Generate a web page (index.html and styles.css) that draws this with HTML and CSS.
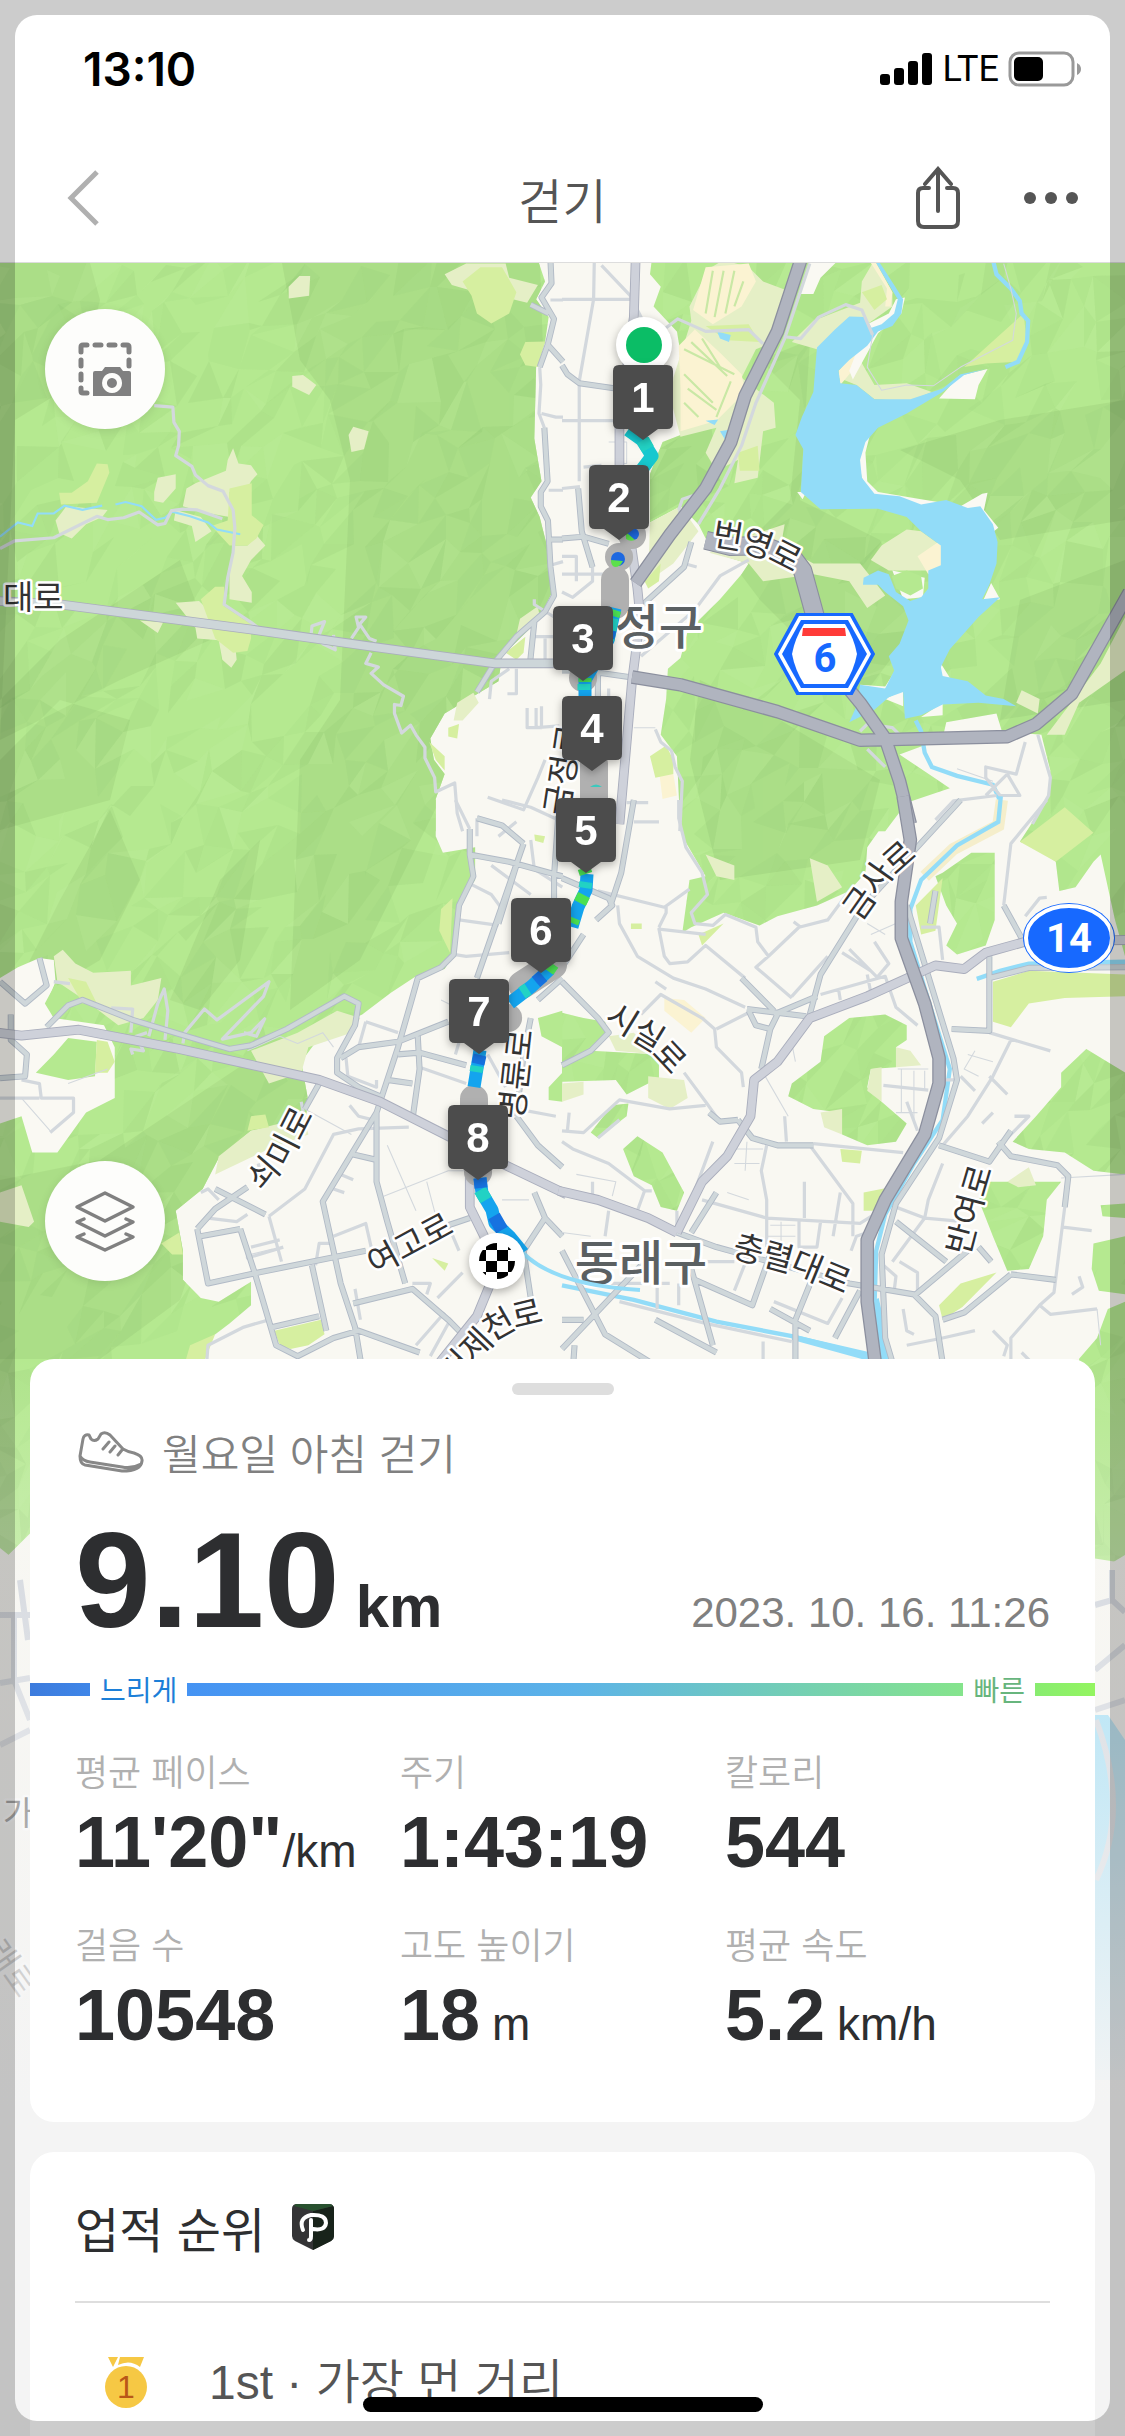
FILE: index.html
```html
<!DOCTYPE html>
<html lang="ko">
<head>
  <meta charset="UTF-8">
  <meta name="viewport" content="width=device-width, initial-scale=1.0">
  <title>걷기</title>
  <link rel="stylesheet" href="styles.css">
</head>
<body>
  <div class="app">
    <header class="header">
      <div class="status-bar">
        <span class="clock">13:10</span>
        <div class="status-icons">
          <svg width="54" height="34" viewBox="0 0 54 34"><rect x="0" y="22" width="10" height="11" rx="3"/><rect x="14" y="16" width="10" height="17" rx="3"/><rect x="28" y="9" width="10" height="24" rx="3"/><rect x="42" y="1" width="10" height="32" rx="3"/></svg>
          <span class="network">LTE</span>
          <svg width="74" height="36" viewBox="0 0 74 36"><rect x="2" y="2" width="63" height="32" rx="9" fill="none" stroke="#999" stroke-width="3"/><rect x="6" y="6" width="29" height="24" rx="5"/><path d="M69 12q4 2 4 6t-4 6z" fill="#999"/></svg>
        </div>
      </div>
      <nav class="nav-bar">
        <button class="icon-btn back" aria-label="뒤로"><svg width="34" height="58" viewBox="0 0 34 58"><path d="M31 3L5 29l26 26" fill="none" stroke="#b0b0b0" stroke-width="5"/></svg></button>
        <h1 class="page-title">걷기</h1>
        <div class="nav-actions">
          <button class="icon-btn" aria-label="공유"><svg width="46" height="64" viewBox="0 0 46 64" fill="none" stroke="#555" stroke-width="4" stroke-linecap="round"><path d="M14 22H8q-5 0-5 5v28q0 6 6 6h28q6 0 6-6V27q0-5-5-5h-6M23 45V4M10 18L23 3l13 15"/></svg></button>
          <button class="icon-btn" aria-label="더보기"><svg width="56" height="14" viewBox="0 0 56 14" fill="#555"><circle cx="7" cy="7" r="6"/><circle cx="28" cy="7" r="6"/><circle cx="49" cy="7" r="6"/></svg></button>
        </div>
      </nav>
    </header>

    <main class="stage">
      <svg class="map" viewBox="0 263 1125 2173" preserveAspectRatio="xMidYMin slice" role="img" aria-label="경로 지도">
        <defs>
          <!-- forest, one shape per tile -->
          <path id="green-a" d="M0 0H1500L1520 60 1495 110 1530 160 1520 230 1495 300 1490 500 1510 620 1480 665 1505 720 1525 800 1540 930 1500 1010 1400 1110 1390 1180 1340 1210 1240 1270 1200 1340 1210 1400 1240 1440 1215 1510V1600H0Z"/>
          <path id="green-b" d="M250 0L245 40 275 75 255 130 320 200 330 260 320 330 330 490 280 510 245 600V735L330 690 380 740 420 820 520 850 500 880 440 950 350 1040 330 1115 295 1145 290 1230 275 1330 320 1390 330 1600H900L960 1520 1080 1480 940 1385 1060 1340 1070 1295 1210 1270 1225 1320 1335 1330 1360 1430 1350 1520 1320 1568H1568V0Z"/>
          <path id="green-c" d="M0 0H1215V100L1235 145 1325 130V220L1275 290 1262 430 1240 465 1160 485 1090 530 1010 590 900 640 840 720 860 830 850 890 700 910 610 985 565 1070 490 1130 510 1240V1320L560 1370 610 1380 700 1325V1390L640 1440 560 1500 510 1568V1600L0 2100Z"/>
          <path id="green-d" d="M330 0H960L900 60 850 130 845 200 800 250 710 290 600 320 550 345 450 310 360 350 335 365 355 220 400 210 335 100ZM1350 0H1568V430L1540 330 1500 150 1480 170 1430 240 1385 250 1375 170 1320 130 1275 115ZM1060 200L1140 145H1205V330L1180 400 1100 425 1070 400 1100 340 1070 290 1040 210ZM630 815L640 780 720 720 730 650 800 600 900 590 960 620V660L930 680V735L860 740 850 790 890 830 960 890 930 940 850 950 780 920 775 860 700 850ZM1255 940L1320 870 1390 790V750L1460 685 1568 750V1030L1480 1020 1400 970 1300 960ZM1160 1100L1190 1050H1390L1350 1100 1340 1200 1300 1290 1240 1295 1200 1200ZM0 585L60 600 120 610 130 650 80 690 270 700V765L180 810 150 770 0 775ZM170 960L210 925 280 970 340 1080 320 1130 275 1120 250 1060 200 1035ZM80 915L140 840 185 835 180 870 100 930ZM1568 1110L1500 1115 1505 1145 1568 1150ZM1568 1200L1480 1220 1475 1290 1495 1350 1568 1360ZM1568 1380L1520 1400 1490 1480 1440 1537 1440 2080 1568 2100Z"/>
          <clipPath id="forest">
            <use href="#green-a" transform="translate(0 260) scale(.3586 .357)"/>
            <use href="#green-b" transform="translate(562 260) scale(.3591 .357)"/>
            <use href="#green-c" transform="translate(0 800) scale(.3586 .3635)"/>
            <use href="#green-d" transform="translate(562 800) scale(.3591 .3635)"/>
          </clipPath>

          <path id="street-a" d="M1535 0L1538 65 1510 105 1545 165 1528 235 1505 300M1518 470L1527 620 1508 650V690L1528 730 1535 860 1545 940 1520 985 1440 1055 1385 1120 1330 1210M1490 1015L1478 1130M1530 240L1570 285M1480 125L1530 150M1535 783H1570"/>
          <path id="main-a" d="M-10 955L170 965 700 1035 1050 1085 1380 1130H1580"/>
          <path id="street-b" d="M0 295L15 320 48 345 150 360M0 780L60 775 130 795M0 1150L60 1150 200 1170M45 640L55 760 85 860M360 790L340 860 220 970M100 1160V1300L80 1568"/>
          <path id="main-b" d="M205 0L200 160 160 460V620L190 780 210 920 218 1000 195 1180 160 1580"/>
          <path id="high-b" d="M665 0L600 200 510 380 470 510 400 640 300 770 205 905M195 1168L330 1190 600 1265 830 1345 1240 1335 1320 1300 1420 1215 1580 930M740 1130L830 1240 900 1340 940 1460 970 1580"/>
          <path id="high-b2" d="M400 785L470 802 560 800 640 830 670 870 700 980 740 1130"/>
          <path id="street-c" d="M130 625L190 565 230 550 370 605 520 650 640 685 700 675 800 630 960 540 1000 560 990 620 940 710V750L1000 790 1060 815M1310 80V150L1320 210 1280 290 1265 425 1230 460 1165 490 1145 560 1110 680 1060 830 1050 860 900 1105 950 1330 990 1450 1010 1568M1310 150L1420 170 1568 210M1050 860V1050L1080 1160 1130 1330M600 1070L740 1140M550 1180L600 1125 690 1065M550 1180L580 1330 720 1300 1020 1240M670 1180L560 1200M670 1180L710 1300 770 1500 830 1530 930 1480 1000 1460 1170 1520M870 1280L910 1460M760 1450L890 1420M890 780L850 850M950 710L1000 680 1110 665 1250 610M1165 650L1170 740 1150 880M1080 770L1150 780M1110 700L1170 695 1300 730M1250 1170L1310 1150M985 1385L1150 1345 1250 1430 1290 1470M1460 120L1330 490M1560 0L1545 210V270M1440 870L1500 950 1568 1010M1490 1080L1520 1150 1568 1200M1520 1150L1460 1240 1480 1370M1330 50L1400 70 1460 120M1480 600L1460 700 1440 870M1500 550L1568 490M0 500L70 560 130 510 110 435M30 590V660L75 700 70 760 0 765M985 975L1050 990M1440 180L1390 340"/>
          <path id="main-c" d="M-10 640L60 648 220 632 500 685 890 770 1060 830 1400 1000 1580 1085M1310 1020V1120L1350 1200 1380 1300 1330 1420 1200 1580"/>
          <path id="street-d" d="M1110 0L840 290 720 480 690 590M960 290L1090 710 1100 770 1050 930 930 1110 890 1250 900 1480 930 1580M515 575L680 595M500 490L590 580M590 590L710 540M520 580L540 620 580 630 600 590M580 630L555 740M0 215L130 270 140 290 95 330M200 0L165 200 135 290M1190 430V635L1085 630M1190 490L1300 462 1580 460M1050 950L1190 995 1250 910M1215 940L1250 980 1380 1005 1410 1035 1400 1120M1250 1305L1375 1320M1250 1305L1120 1410 1060 1430M320 1190L430 1230 800 1330 980 1360 1040 1420 1065 1580M490 880L530 930 600 950 700 950M490 880L440 885 410 860M430 1080L360 1190M0 730L80 690 130 640 100 600 0 500M360 1290L420 1500M370 1320L530 1390 580 1250M580 1400L690 1460M0 1240L120 1470 280 1568M0 1510L240 1260M260 1430L430 1520M720 1260L650 1430V1580M760 1480L830 1350M985 1360L1130 1240M930 1160L1070 1270M30 1568L35 1500M1160 1230L1195 1270M1230 290L1280 380M1040 250L1025 340M0 460L60 370M0 1430H60"/>
          <path id="main-d" d="M1580 385L1290 390 1180 420 1120 465 1040 455 850 540 690 600 600 720 535 770 525 870 460 980 390 1050 320 1190M-10 1075L100 1100 240 1150 320 1190"/>
          <path id="high-d" d="M950 -10L970 110 945 280V380L1010 560 1050 710V780L1010 920 900 1100 850 1210V1380L878 1590"/>

          <path id="lbl-beonyeong" d="M713 535Q760 538 812 572"/>
          <path id="lbl-geumjeong" d="M557 815L573 710"/>
          <path id="lbl-geumsa" d="M851 916L880 875 926 834"/>
          <path id="lbl-sisil" d="M609 1012L650 1037 694 1084"/>
          <path id="lbl-myeongnyun" d="M512 1120L523 1020"/>
          <path id="lbl-soemi" d="M254 1185L282 1153 307 1104"/>
          <path id="lbl-yeogo" d="M370 1266L466 1214"/>
          <path id="lbl-geoje" d="M445 1378L490 1331Q512 1313 565 1309"/>
          <path id="lbl-chungnyeol" d="M734 1246L800 1264 868 1292"/>
          <path id="lbl-banyeo" d="M958 1254L972 1200 988 1146"/>
          <clipPath id="flag-clip"><circle cx="497" cy="1261" r="18"/></clipPath>
        </defs>

        <rect class="land" x="0" y="263" width="1125" height="2173"/>
        <g class="forest">
          <use href="#green-a" transform="translate(0 260) scale(.3586 .357)"/>
          <use href="#green-b" transform="translate(562 260) scale(.3591 .357)"/>
          <use href="#green-c" transform="translate(0 800) scale(.3586 .3635)"/>
          <use href="#green-d" transform="translate(562 800) scale(.3591 .3635)"/>
        </g>
        <g clip-path="url(#forest)">
          <g class="relief">
            <path d="M282 263H540L555 700 440 800 360 960 290 1010 300 760 340 700 350 480 330 400 300 360ZM15 420L80 380 100 300 90 263H0V700L60 640 180 560 210 640 120 680 0 740ZM110 800L130 720 60 700 0 760V830ZM0 1020L60 900 110 810 140 880 100 960ZM170 1000L220 880 260 840 240 960 200 1010ZM100 1160L250 1060 330 1090 220 1180 180 1300 100 1359H0V1180Z"/>
            <path d="M640 460L710 420 720 480 650 520ZM730 560L790 500 800 400 760 360 810 340 800 500 880 540 920 620 860 700 760 600ZM900 450L1000 420 1125 400V520L1000 540 960 480ZM1020 600L1125 560V700L1000 720ZM700 680L780 720 880 780 860 860 720 880 690 760Z"/>
          </g>
          <g id="facets"></g>
        </g>

        <!-- north west -->
        <g transform="translate(0 260) scale(.3586 .357)">
          <path class="pale" d="M1240 40L1300 10H1410L1420 50 1500 70 1470 120 1430 110 1330 90 1260 70ZM805 75L835 45H865L862 100 805 108ZM815 325L845 322 882 350 862 378 815 355ZM972 490L985 467 1028 480 1015 530 980 538ZM430 650L440 610 490 600V640L455 680 430 675ZM155 730L185 690 300 700 285 720 240 740 200 780 165 765ZM510 690L520 640 545 625 630 590 635 560 650 527 665 570 700 575 718 600 700 620 690 640 640 650V720L560 705ZM485 730L490 700 560 720 590 760 545 790 535 745ZM690 800L715 770 740 800 700 840 675 885 702 930V960L640 950V880L655 800ZM490 960L555 955 600 1000 640 1030 655 1070 660 1120 645 1142 620 1120 610 1065 550 1060 545 1030ZM390 1010L455 1015 440 1045ZM1440 1050L1450 1005 1500 970 1505 1000ZM1265 1290L1275 1240 1320 1212 1335 1240 1290 1290Z"/>
          <path class="meadow" d="M1290 60L1340 20H1400L1440 90 1420 150 1370 178 1330 150 1315 100ZM1450 265L1465 230 1520 228 1500 300 1465 295ZM165 652H200L245 620 270 570 300 572 305 595 270 680 170 685ZM640 640L702 625V715L735 742 715 780 690 800 640 800 590 745 635 730ZM560 950L600 915H625V970L700 1020V1060L690 1095 650 1100 600 1060ZM1410 1100L1465 1055 1460 1100 1440 1120ZM1197 1350L1240 1390V1430L1215 1400ZM1250 1310L1280 1300 1275 1340 1250 1335Z"/>
          <path class="stream thin" d="M0 775L50 735 90 745 105 710H150L180 688 230 700 285 688M322 685L350 678 395 690 435 728 460 722 480 705 530 718 580 735 605 755 670 768"/>
          <path class="minor" d="M430 408L482 412 485 455 500 480 498 520 490 548 535 578 545 602 580 632 622 648 650 700 655 750 650 820 635 890 625 965 700 1015 720 1030M0 808L40 787 150 778 270 718 300 727 345 722 388 706 440 742 460 738 478 702 510 698 550 700 620 725M868 1045L870 1025 905 1013 890 1050 900 1075 935 1092 930 1050M980 1060L1000 1030 993 1000H1020L1003 1020 1030 1060 1050 1068M1035 1100L1020 1130 1055 1140 1035 1158 1070 1190 1125 1222 1118 1248 1100 1245V1270L1120 1325 1145 1303 1160 1330 1185 1365V1395L1212 1450 1215 1490 1268 1465 1275 1550 1290 1600M1505 300L1508 350 1503 430 1518 470M1510 430L1550 440H1570M1530 645H1570M1535 855L1570 845M1490 950V965L1545 1000M1485 1055H1570M1520 1060V1125M1365 1230L1370 1180 1420 1145M1440 1145V1215H1415M1470 1255V1310H1510V1250M1495 1255V1310L1560 1305M1360 1505L1460 1540 1500 1450 1520 1400M1535 112H1570"/>
          <use href="#street-a" class="street-case"/><use href="#street-a" class="street"/>
          <use href="#main-a" class="main-case"/><use href="#main-a" class="trunk"/>
        </g>

        <!-- north east -->
        <g transform="translate(562 260) scale(.3591 .357)">
          <path class="pale" d="M390 60L400 30 450 0 520 20 560 60 640 90 600 160 590 230 540 250 500 330 590 400 595 470 560 480 545 610 480 625 490 560 430 590 400 540 430 470 330 495 305 400 310 330 360 170 355 130ZM640 230L700 170 830 120 835 60 870 0 920 90V130L850 180 790 170 710 250ZM890 800L960 755 1000 760 1055 800 1075 850 1020 870 910 870 860 840ZM410 820L500 780 620 740 610 800 700 850 830 850 870 900 900 940 850 975 800 900 700 880 560 900 520 850ZM245 735L330 690 380 760 310 850 240 900ZM820 350L870 390 970 395 1030 370 960 345 870 350 830 280 860 240 790 280 770 330ZM1265 1240L1280 1205 1330 1230 1325 1270ZM1350 1330L1500 1130 1568 1000V1150L1440 1240 1400 1330Z"/>
          <path class="sand" d="M365 140L400 20 520 10 540 60 500 130 420 180ZM325 240L370 195 440 260 500 320 510 370 430 450 330 480 330 360ZM1055 785L1075 850 1020 880 990 830ZM870 0L920 90 915 130 900 130 905 80 855 0ZM775 350L770 310 830 240 850 240 800 320ZM270 1430L310 1440 320 1500 280 1510Z"/>
          <path class="meadow" d="M1120 300L1285 150 1295 230 1270 285 1180 290ZM400 185L520 180 550 230 460 225ZM490 540L545 520 550 590 495 590ZM835 90L890 70 905 110 870 140ZM230 900L275 850 270 900 240 920ZM245 1390L290 1360 310 1400 310 1440 260 1450Z"/>
          <path class="fairway" d="M420 30L400 150M450 30L425 160M480 30L455 150M505 60L480 130M340 250L480 320M360 230L460 325M390 220L440 300M340 320L420 400M350 360L430 420M340 400L380 440M470 340L430 440"/>
          <path class="bare" d="M690 0H770L720 50 700 95 660 95ZM1050 388L1105 325 1185 305 1160 350 1150 390ZM850 180L910 150 930 110 955 105 945 150 880 205 810 335 800 310ZM835 610L825 560 840 500 860 480 845 540 850 620 880 650 1000 670 1060 680 1110 690 1170 655 1185 652 1175 700 1215 750 1190 770 1100 710 1000 690 860 660ZM655 650L680 650 670 670ZM920 870L1010 890 1005 945 950 950ZM1170 960L1195 905 1220 950ZM830 1190L900 1195 925 1155 930 1180 880 1215ZM940 1080L965 1020 975 1080ZM1055 1130L1080 1170 1055 1170ZM1000 1280L1060 1240V1275ZM900 1230L950 1205V1250Z"/>
          <path class="water" d="M710 245L760 195 800 158 845 160 862 190 890 180 925 150 935 110 905 60 870 0H880L925 70 950 110 945 150 920 185 880 200 850 240 800 280 770 310 775 345 820 350 870 390H970L1060 360 1110 320 1180 305 1120 322 1060 370 960 430 880 470 845 510 830 560 835 610 870 655 940 662 1000 685 1070 672 1130 695 1165 690 1200 740 1213 790 1210 850 1190 910 1170 950 1220 945 1160 1000 1080 1090 1055 1140 1060 1165 1130 1180 1180 1220 1230 1230 1265 1250 1160 1240 1060 1245 1000 1275 955 1285 950 1210 910 1225 870 1260 800 1295 820 1250 830 1190 900 1200 925 1150 910 1110 940 1075 965 1010 950 970 900 930 880 910H838L840 890 880 870 910 880 930 930 970 955 1000 945 1020 920V870L1055 855V800L1000 760 960 720 880 697 720 698 665 650 672 530 650 490 668 440 700 370ZM432 200L470 210 465 230 440 220ZM400 450L435 447 425 462ZM440 480L470 475 455 505Z"/>
          <path class="forest" d="M918 885L960 870 1000 885 1005 920 970 940 930 920Z"/>
          <path class="stream" d="M1200 0L1210 40 1250 80 1275 115 1280 150 1298 170 1295 230 1270 285 1235 300M985 1290L1000 1320 1010 1380 1030 1420 1100 1445 1200 1470 1218 1510 1215 1580"/>
          <path class="minor" d="M90 0L88 110 48 340V620M0 110H200M110 15L190 100 235 190M0 450H170M0 640L50 635M85 840V900L30 945 0 930M620 215L665 220 715 160 790 125 835 140 865 210M290 190L322 165 400 200 520 195 560 235M520 840L440 885 370 980 220 1110M340 850L375 860M0 880H120M0 830H40V900M260 1315L275 1350 305 1375 315 1420 335 1460 328 1600M1290 1350L1265 1440 1180 1420V1450L1220 1500H1275L1240 1440 1180 1500M1325 1330L1360 1450 1355 1500 1310 1580M1040 1568L1090 1515 1210 1500M325 700L335 670 380 655M325 700L350 720M180 1520H240M60 580L110 575M830 1320L850 1300 920 1310 950 1340M850 1370L900 1420M110 1000V1130M130 1200V1400M200 1100L240 1060"/>
          <path class="minor hair" d="M865 210L850 300 890 365 960 350 1035 352 1110 300 1255 225 1265 150 1250 80 1230 10M1100 1425L1200 1460M130 510H180V570H160M200 1310H260"/>
          <use href="#street-b" class="street-case"/><use href="#street-b" class="street"/>
          <use href="#main-b" class="main-case"/><use href="#main-b" class="main"/>
          <path class="minor" d="M690 10L620 220 540 400 500 520 440 640 380 740"/>
          <use href="#high-b2" class="wide-case"/><use href="#high-b" class="high-case"/>
          <use href="#high-b2" class="wide"/><use href="#high-b" class="high"/>
        </g>

        <!-- south west -->
        <g transform="translate(0 800) scale(.3586 .3635)">
          <path class="bare" d="M0 490L50 460 110 435 150 440 155 500 130 560 150 600 290 620 320 680V820L240 860 160 970H90L60 870 0 890V1050L-10 1150V480Z"/>
          <path class="forest" d="M100 750L150 700 190 655 270 665 265 760 190 770ZM125 560L155 505 190 540 190 585 150 600Z"/>
          <path class="pale" d="M150 430L175 412 210 450 260 475 365 470V510L450 490 440 550 400 600 330 620 250 560 160 500ZM700 690L830 640 940 580 1005 600 980 640 860 680 840 750 750 780ZM610 980L700 910 780 890 850 880 860 920 750 960 600 1030ZM0 1080L60 1060 95 1160 80 1175 0 1160Z"/>
          <path class="meadow" d="M190 490L240 500 270 560 230 560ZM270 660L300 665 320 720 300 750 265 750ZM700 870L740 865 750 900 690 910ZM1230 300L1262 270 1255 420 1225 360ZM450 1220L500 1190 510 1250 480 1250ZM530 1500L600 1470 560 1568H510ZM765 1460L895 1430 905 1470 860 1500 810 1510 780 1500ZM1490 95L1520 100 1515 118 1492 112ZM1205 1260L1250 1275 1240 1295Z"/>
          <path class="forest" d="M1500 600L1568 580V680L1510 650ZM1530 790L1568 750V830L1530 825Z"/>
          <path class="minor" d="M365 640L370 575 310 572M415 650L440 560 458 520 468 580 460 660M370 700L365 685 400 690 380 650 410 640M510 670L515 640 570 575 605 605 750 500 735 540 620 658 700 640 738 602 715 650 680 640M1310 230L1370 260 1400 300M1280 330L1390 345M1265 425L1300 430 1420 420M1170 735L1300 780M750 1145L850 1070 930 920 1000 905 1140 900M750 1145L785 1270M575 1568L580 1500 680 1450 750 1430M1270 0L1310 80M1390 100L1440 60M1370 180L1480 260M1480 110L1490 190 1568 240M1020 610L1000 680M1020 610L1110 640M965 710L970 760 1050 790V770M700 1230L780 1210M880 1280L890 1220H930M930 1200L1020 1165 1035 1230M560 1080L580 1070 610 1100M150 500L195 505M60 770L110 780 115 820H205V860L140 915M0 820H110M720 1000L730 1040M1250 1170L1280 1240M1190 1360L1200 1330 1150 1330M1220 1370L1290 1300M690 1240V1260L790 1230M1270 700L1300 600M1360 700L1410 790M1440 850L1550 870M1330 100V50M840 830L850 880M975 840L1000 870 1040 880M950 1030L985 1045M930 1070L960 1080M580 1150L660 1160 690 1140M990 1345L1005 1430M1160 1500L1240 1410M1200 1530L1250 1440M1400 0L1480 20 1568 60"/>
          <path class="minor hair" d="M60 820L140 910M190 780L300 740M1080 950L1160 1130M1070 1090L1250 1020H1300M1190 1050L1230 1200M850 850L980 920M700 1250L760 1235M690 690L780 650 830 670 900 640 930 680M1400 1100H1475M1230 550L1290 580"/>
          <use href="#street-c" class="street-case"/><use href="#street-c" class="street"/>
          <use href="#main-c" class="main-case"/><use href="#main-c" class="main"/>
        </g>

        <!-- south east -->
        <g transform="translate(562 800) scale(.3591 .3635)">
          <path class="pale" d="M690 160L740 180 780 240 710 280ZM400 150L480 180 480 220 430 210ZM240 760L340 770 350 820 300 850 240 820ZM0 780L60 775 60 810 0 830ZM860 740L890 735V790L890 830 850 800ZM720 860L780 850V920L730 900ZM1240 1050L1300 1010 1320 1060 1270 1065ZM130 650L200 640 260 700 150 690ZM930 680L970 690 1000 730 930 735Z"/>
          <path class="meadow" d="M1200 500L1300 470 1568 480V540L1400 545 1300 560 1250 625 1200 610ZM985 290L1060 215 1040 360 1000 370ZM840 1080L900 1068 880 1130H840ZM775 960L835 965 830 1000 780 995ZM1050 1390L1110 1330 1210 1300 1115 1395 1060 1430ZM192 340H222V355H192ZM380 370L450 340 390 400ZM1275 115L1400 20 1480 90 1375 170Z"/>
          <path class="sand" d="M285 545L340 550 400 600 360 640 285 580Z"/>
          <path class="bank" d="M1225 0L1215 70 1090 135 1010 210"/>
          <path class="stream" d="M1222 -10L1215 60 1100 125 1000 220 970 300V390L1020 550 1080 740 1060 880 980 1000 900 1140 875 1240 870 1400 910 1580M0 1335L200 1375 430 1435 640 1475 860 1530M1155 492L1220 470 1300 450 1568 445"/>
          <path class="water" d="M860 1380L882 1370 930 1580H890ZM640 1470L860 1520V1545L640 1485Z"/>
          <path class="minor" d="M325 0V50L345 130 390 200 405 260 360 310 370 340 420 345 455 315 540 350 545 390 575 430M155 290L160 340 210 430 310 490 400 520 510 570M400 370L270 355 285 430 300 450 350 445 400 400 510 490M100 250L285 295 355 245M270 350L290 310 290 290M575 430L540 460 640 545M640 540L740 430M575 430L660 350 740 330 800 250M220 590L275 535 390 600 425 630 430 680 500 750 505 790M430 630L530 580M1350 0L1250 120 1230 290M800 410L880 490M780 420L860 470M720 535L900 485 930 570 990 620M870 390L910 450 880 485M850 480L860 530M770 520L775 550M570 950L555 1020 570 1100V1230M690 950L810 1110V1200M700 945L950 970M390 1100L570 1150 830 1165 870 1140M675 1050V1150M775 1080L755 1200M660 1155V1230H710L720 1160M0 940L30 960 130 1000 230 1075 210 1130M230 1075H250M340 750L400 830 440 885M0 910L60 915 160 825 300 850 400 840M20 860L15 910M160 880L100 930M1060 1000L1020 1100 1010 1150 920 1270M1250 660L1200 760 1130 870 1060 950M1190 640L1360 690M1190 760L1240 810M1110 760L1150 800M1170 890L1200 860M1395 1175L1475 1185M1400 1120L1370 1355 1330 1390 1360 1415 1490 1400M1330 1390L1250 1480V1568M895 785L1020 798M960 830L990 910M420 940L360 1100M85 1050V1100M130 1130L120 1200M130 1330H300M160 1380L400 1440 640 1490M480 1350L520 1250M590 1380L740 1440 780 1370M620 870L625 940M930 1120L1010 1150 1120 1160M895 1280L930 1310 925 1350M950 1400L960 1460 980 1470M960 1500L1060 1480 1150 1460M805 1240L820 1200 850 1190M1440 1310L1450 1340 1420 1360M1290 320L1330 270 1350 268M1060 770H1100M1000 350H1050L1060 440M990 1360V1300L940 1270M200 60H270M320 1190V1130M260 500L290 520M645 335L665 350M370 1270H480M265 1330V1400M325 1330V1390M560 1490V1568M1200 1460L1240 1500 1230 1530M1260 870L1300 870 1240 930M1280 1520L1310 1550"/>
          <path class="minor hair" d="M560 750L630 870M850 340L900 370M860 370L930 340M945 740V860M980 745V890M1010 745V800M935 740H1020M930 860H990M480 960H560M480 1000H550M515 940L510 1020M580 1170H650M570 1200H650M610 1160V1230M640 670L650 720M1130 700L1200 720M1150 690L1120 740 1160 760M0 1190L80 1200M40 1030L150 1050 140 1090M460 1080L520 1100M1390 1040L1568 1030M1490 1400L1500 1500"/>
          <use href="#street-d" class="street-case"/><use href="#street-d" class="street"/>
          <use href="#main-d" class="main-case"/><use href="#main-d" class="main"/>
          <use href="#high-d" class="high-case"/><use href="#high-d" class="high"/>
        </g>

        <!-- edges that stay visible beside the sheet -->
        <path class="land" d="M0 1548L30 1572V2100H0ZM1095 1564H1110L1125 1555V2100H1095Z"/>
        <path class="water" d="M1095 1715H1108L1125 1740V2080H1095Z"/>
        <path class="edge-road" d="M0 1615H30M14 1615V1680L30 1720M0 1683L30 1678M0 1745L30 1730M20 1580L28 1640M1095 1605L1112 1600 1125 1612M1112 1570V1600M1095 1670L1125 1645M1095 1710L1125 1700M1096 1720Q1130 1810 1096 1880"/>

        <g class="road-labels">
          <text x="3" y="609">대로</text>
          <text dy="11"><textPath href="#lbl-beonyeong">번영로</textPath></text>
          <text dy="11"><textPath href="#lbl-geumjeong">금정로</textPath></text>
          <text dy="11"><textPath href="#lbl-geumsa">금사로</textPath></text>
          <text dy="11"><textPath href="#lbl-sisil">시실로</textPath></text>
          <text dy="11"><textPath href="#lbl-myeongnyun">명륜로</textPath></text>
          <text dy="11"><textPath href="#lbl-soemi">쇠미로</textPath></text>
          <text dy="11"><textPath href="#lbl-yeogo">여고로</textPath></text>
          <text dy="11"><textPath href="#lbl-geoje">거제천로</textPath></text>
          <text dy="11"><textPath href="#lbl-chungnyeol">충렬대로</textPath></text>
          <text dy="11"><textPath href="#lbl-banyeo">반여로</textPath></text>
          <text x="3" y="1825">가</text>
          <text transform="translate(-16 1950) rotate(55)">래로</text>
        </g>
        <g class="area-labels">
          <text x="703" y="644" text-anchor="end">정구</text>
          <text x="641" y="1280" text-anchor="middle">동래구</text>
        </g>

        <path d="M797 614h55l22 40-22 40h-55l-22-40z" fill="#1769ff" stroke="#1769ff" stroke-width="2"/>
        <path d="M799 616h51l21 38-21 38h-51l-21-38z" fill="#fff"/>
        <path d="M801 620h47l19 34-19 34h-47l-19-34z" fill="#1769ff"/>
        <path d="M804 624h41q9 14 12 30-3 16-12 30h-41q-9-14-12-30 3-16 12-30z" fill="#fff"/>
        <path d="M803 628h42l1 8h-44z" fill="#ff3b38"/>
        <text class="shield-text shield-blue" x="825" y="672">6</text>
        <ellipse cx="1069" cy="938" rx="46" ry="35" fill="#1769ff"/>
        <ellipse cx="1069" cy="938" rx="43" ry="32" fill="none" stroke="#fff" stroke-width="4"/>
        <text class="shield-text shield-white" x="1069" y="952">14</text>

        <g class="route">
          <path class="paused" d="M632 535h.1M619 557h.1M615 580V605M583 678h.1M594 764V806M553 965L522 985M508 1018h.1M474 1099V1110M478 1172h.1"/>
          <path d="M628 430L642 440 652 456 640 472 628 530" stroke="#17c8cf"/>
          <path d="M615 608L608 640 585 680 585 710M587 874L586 890 578 907 572 927M550 969L532 986 510 1003M480 1050L474 1087M480 1178L482 1193 492 1210 495 1223 510 1237 523 1253" stroke="#14a4ee"/>
          <path d="M643 440L648 449M612 618L608 640M584 684V690M586 882L585 888M528 989L522 993M477 1066L476 1072M480 1190L486 1200" stroke="#22d2c4"/>
          <path d="M615 610L613 616M585 678V682M584 868L586 874M584 895L580 903M574 918L572 923M553 964L548 971" stroke="#4be052"/>
          <path d="M610 630L608 638M480 1055L478 1064M543 976L536 982M480 1178L481 1188M494 1216L502 1230" stroke="#1772e0"/>
        </g>
        <circle cx="633" cy="534" r="6" fill="#1d68e0"/><path d="M626 532l9 8q-5 2-9-1z" fill="#5ce04a"/>
        <circle cx="618" cy="559" r="7" fill="#1d68e0"/><path d="M611 560l12 1q-3 6-8 6-4-1-4-7z" fill="#5ce04a"/>
        <path d="M590 787q6-5 12 0z" fill="#3bc9bd"/>
        <path class="canal" d="M523 1253Q555 1285 640 1290"/>

        <g class="dots">
          <circle cx="644" cy="345" r="28" fill="#fff"/><circle cx="644" cy="345" r="18" fill="#0bbd66"/>
          <circle cx="497" cy="1261" r="28" fill="#fff"/>
        </g>
        <path clip-path="url(#flag-clip)" d="M486 1241h11v9h-11zM508 1241h11v9h-11zM475 1250h11v11h-11zM497 1250h11v11h-11zM486 1261h11v11h-11zM508 1261h11v11h-11zM475 1272h11v9h-11zM497 1272h11v9h-11z"/>
        <g id="pins" class="pins"></g>
      </svg>

      <div class="map-controls">
        <button class="round-btn" aria-label="지도 캡처">
          <svg width="54" height="54" viewBox="0 0 54 54"><path d="M3 10V5q0-2 2-2h4M17 3h6M31 3h6M45 3h4q2 0 2 2v5M51 18v6M3 18v6M3 32v6M3 46v3q0 2 2 2h4" fill="none" stroke="#808080" stroke-width="5" stroke-linecap="round"/><path fill="#808080" fill-rule="evenodd" d="M15 31q0-2 2-2h7l3-4h15l3 4h6q2 0 2 2v23H15zM34 31a10 10 0 1 0 .1 0zM34 36a5 5 0 1 1-.1 0z"/></svg>
        </button>
        <button class="round-btn" aria-label="지도 레이어">
          <svg width="62" height="62" viewBox="0 0 62 62" fill="none" stroke="#808080" stroke-width="3.5" stroke-linejoin="round" stroke-linecap="round"><path d="M31 3l28 14-28 14L3 17zM10 29l-7 3 28 14 28-14-7-3M10 44l-7 3 28 13 28-13-7-3"/></svg>
        </button>
      </div>

      <div class="sheet">
        <section class="card summary">
          <div class="handle"></div>
          <div class="activity">
            <svg width="66" height="42" viewBox="0 0 66 42" fill="none" stroke="#888" stroke-width="3" stroke-linecap="round" stroke-linejoin="round"><path d="M2 25L5 8q1-5 6-4l2 4q3 3 7 0l3-5q4-3 9 1l13 14q5 3 11 4 9 3 8 8-1 10-20 10L7 34q-5-1-5-9q3 5 10 6l32 5q10 2 19-3M25 18l6-7M32 21l5-6M40 24l4-5"/></svg>
            <h2 class="activity-title">월요일 아침 걷기</h2>
          </div>
          <div class="distance-row">
            <div class="distance">9.10<span class="distance-unit">km</span></div>
            <time class="date" datetime="2023-10-16T11:26">2023. 10. 16. 11:26</time>
          </div>
          <div class="speed-scale">
            <span class="bar slow"></span>
            <span class="speed-label blue">느리게</span>
            <span class="bar middle"></span>
            <span class="speed-label green">빠른</span>
            <span class="bar fast"></span>
          </div>
          <dl class="stats">
            <div><dt>평균 페이스</dt><dd>11'20"<small>/km</small></dd></div>
            <div><dt>주기</dt><dd>1:43:19</dd></div>
            <div><dt>칼로리</dt><dd>544</dd></div>
            <div><dt>걸음 수</dt><dd>10548</dd></div>
            <div><dt>고도 높이기</dt><dd>18<small class="spaced">m</small></dd></div>
            <div><dt>평균 속도</dt><dd>5.2<small class="spaced">km/h</small></dd></div>
          </dl>
        </section>

        <section class="card awards">
          <div class="awards-head">
            <h2>업적 순위</h2>
            <svg width="44" height="48" viewBox="0 0 44 48"><path d="M6 1h32q5 0 5 5v27q0 3-3 5L22 47 4 38q-3-2-3-5V6q0-5 5-5z" fill="#343436"/><path d="M22 8l20-5q1 1 1 3v27q0 3-3 5L22 47z" fill="#18231a"/><path d="M3 3q1-2 3-2h32q3 0 4 2L22 8z" fill="#28512f"/><path d="M12 27q-5-12 8-15 15-1 15 8-1 8-13 6M20 17v16q0 4-2 4" fill="none" stroke="#fff" stroke-width="4" stroke-linecap="round"/></svg>
          </div>
          <div class="award">
            <svg width="42" height="52" viewBox="0 0 42 52"><path d="M3 0h10L8 10zM15 0h24l-4 10Q25 2 13 8z" fill="#f6c844"/><circle cx="21" cy="30" r="21" fill="#f6c844"/><text class="medal-number" x="21" y="41">1</text></svg>
            <span>1st · 가장 먼 거리</span>
          </div>
        </section>
      </div>
    </main>
    <div class="home-indicator"></div>
    <div class="frame"></div>
  </div>

<script>
  // tip position of each kilometre marker
  const pins = [[643, 440], [619, 540], [583, 681], [592, 771], [586, 873], [541, 973], [479, 1054], [478, 1180]];
  document.getElementById('pins').innerHTML = pins.map(([x, y], i) => `
    <g>
      <path d="M${x - 24} ${y - 75}h48q6 0 6 6v52q0 6-6 6h-9l-15 11-15-11h-9q-6 0-6-6v-52q0-6 6-6z"/>
      <text x="${x}" y="${y - 28}">${i + 1}</text>
    </g>
  `).join('');

  // terrain facets over the forest
  let seed = 7;
  function rnd() {
    seed = (seed * 16807) % 2147483647;
    return seed / 2147483647;
  }
  const shades = ['', '', '', ''];
  const grid = [];
  for (let r = 0; r < 56; r++) {
    grid.push([]);
    for (let c = 0; c < 60; c++) {
      grid[r].push([Math.round(c * 22 - r * 3 + rnd() * 24 + 60), Math.round(250 + r * 26 + rnd() * 28)]);
    }
  }
  grid.forEach(row => row.unshift(...row.slice(0, 8).map(([x, y]) => [x - 176, y])));
  for (let r = 0; r < 55; r++) {
    for (let c = 0; c < 67; c++) {
      const a = grid[r][c], b = grid[r][c + 1], d = grid[r + 1][c], e = grid[r + 1][c + 1];
      [[a, b, d], [b, e, d]].forEach(t => {
        const k = Math.floor(rnd() * 8);
        if (k < 4) shades[k] += `M${t[0]}L${t[1]}L${t[2]}Z`;
      });
    }
  }
  document.getElementById('facets').innerHTML = shades.map((d, i) => `<path class="facet-${i}" d="${d}"/>`).join('');
</script>
</body>
</html>
```
FILE: styles.css
```css
* { box-sizing: border-box; }
body { margin: 0; font-family: "Liberation Sans", "Noto Sans CJK KR", sans-serif; background: #f4f4f4; color: #2d2e30; }
h1, h2, dl, dd { margin: 0; }
button { border: none; background: none; padding: 0; cursor: pointer; font: inherit; }
svg { display: block; }
.app { position: relative; display: flex; flex-direction: column; height: 100vh; overflow: hidden; }

/* header */
.header { background: #fff; border-bottom: 1px solid #ddd; position: relative; z-index: 1; }
.status-bar { display: flex; justify-content: space-between; align-items: center; height: 138px; padding: 0 43px 0 83px; }
.clock { font-family: Inter, sans-serif; font-weight: 600; font-size: 46px; color: #000; }
.status-icons { display: flex; align-items: center; gap: 9px; }
.network { font-family: Roboto, sans-serif; font-size: 36px; line-height: 36px; color: #000; }
.nav-bar { display: grid; grid-template-columns: 1fr auto 1fr; align-items: center; height: 124px; padding: 0 46px 4px; }
.icon-btn { display: block; }
.back { padding-left: 20px; }
.page-title { font-family: "Noto Sans CJK KR", sans-serif; font-weight: 350; font-size: 48px; line-height: 60px; color: #555; }
.nav-actions { display: flex; justify-content: flex-end; align-items: center; gap: 62px; }

/* map */
.stage { position: relative; flex: 1; display: flex; flex-direction: column; min-height: 0; }
.map { position: absolute; inset: 0; width: 100%; height: 100%; }
.map-controls { position: relative; display: flex; flex-direction: column; justify-content: space-between; align-items: flex-start; flex: none; height: 45vh; padding: 46px 45px 78px; }
.round-btn { width: 120px; height: 120px; border-radius: 50%; background: #fdfdfb; display: flex; align-items: center; justify-content: center; box-shadow: 0 2px 10px rgba(0,0,0,0.1); }

.land { fill: #f9f8f2; }
.forest { fill: #b5e990; }
.relief { fill: #a6d983; opacity: 0.7; }
.facet-0 { fill: #7fb45f; opacity: 0.06; }
.facet-1 { fill: #7fb45f; opacity: 0.12; }
.facet-2 { fill: #c4f0a0; opacity: 0.18; }
.facet-3 { fill: #8fc56e; opacity: 0.14; }
.pale { fill: #e5efc6; }
.meadow { fill: #d6efa0; }
.sand { fill: #fbf3d2; }
.bare { fill: #faf9f3; }
.water { fill: #92dcf8; }
.fairway { fill: none; stroke: #c9e8a5; stroke-width: 6; }
.stream { fill: none; stroke: #92dcf8; stroke-width: 12; }
.stream.thin { stroke-width: 6; }
.bank { fill: none; stroke: #f5eecb; stroke-width: 34; }
.minor, .street, .street-case, .main, .trunk, .main-case, .high, .high-case, .wide, .wide-case { fill: none; stroke-linejoin: round; }
.minor { stroke: #d3d8dd; stroke-width: 9; }
.minor.hair { stroke-width: 3; }
.street-case { stroke: #b1bac6; stroke-width: 17; }
.street { stroke: #cfd7da; stroke-width: 12; }
.main-case { stroke: #a9adbc; stroke-width: 27; }
.main { stroke: #ced1da; stroke-width: 22; }
.trunk { stroke: #cdd6d9; stroke-width: 22; }
.high-case { stroke: #8b8f9e; stroke-width: 38; }
.high { stroke: #b0b4bf; stroke-width: 31; }
.wide-case { stroke: #8b8f9e; stroke-width: 54; }
.wide { stroke: #b0b4bf; stroke-width: 48; }
.edge-road { fill: none; stroke: #cdd2da; stroke-width: 6; }
.canal { fill: none; stroke: #92dcf8; stroke-width: 4; }

.map text { font-family: "Noto Sans CJK KR", sans-serif; }
.road-labels { font-size: 33px; font-weight: 400; fill: #333; stroke: #fff; stroke-width: 5; stroke-linejoin: round; paint-order: stroke; }
.area-labels { font-size: 48px; font-weight: 500; fill: #5b6062; stroke: #fff; stroke-width: 6; stroke-linejoin: round; paint-order: stroke; }
.map .shield-text { font-family: Roboto, sans-serif; font-size: 40px; font-weight: 700; text-anchor: middle; }
.shield-blue { fill: #1769ff; }
.shield-white { fill: #fff; }
.route path { fill: none; stroke-width: 13; stroke-linejoin: round; }
.route .paused { stroke: #b0b0b0; stroke-width: 28; stroke-linecap: round; }
.dots, .pins { filter: drop-shadow(0 3px 4px rgba(0,0,0,0.3)); }
.pins path { fill: #4c4c4c; }
.map .pins text { font-family: "Liberation Sans", sans-serif; font-size: 42px; font-weight: 700; fill: #fff; text-anchor: middle; }

/* sheet */
.sheet { position: relative; flex: 1; display: flex; flex-direction: column; gap: 30px; min-height: 0; padding: 0 30px; background: linear-gradient(rgba(244,244,244,0), #f4f4f4 750px); }
.card { background: #fff; border-radius: 24px; }
.summary { flex: none; padding: 24px 0 62px; }
.handle { width: 102px; height: 12px; border-radius: 6px; background: #dedede; margin: 0 auto 27px; }
.activity { display: flex; align-items: center; gap: 18px; padding: 0 48px; }
.activity-title { font-family: "Noto Sans CJK KR", sans-serif; font-weight: 350; font-size: 42px; line-height: 60px; color: #808080; }
.distance-row { display: flex; justify-content: space-between; align-items: baseline; padding: 0 45px; margin-top: 28px; }
.distance { font-weight: 700; font-size: 136px; line-height: 140px; }
.distance-unit { font-size: 60px; line-height: 60px; margin-left: 16px; }
.date { font-size: 42px; line-height: 60px; color: #808080; }
.speed-scale { display: flex; align-items: center; gap: 10px; height: 40px; margin-top: 19px; }
.bar { height: 13px; }
.slow { width: 60px; background: linear-gradient(90deg, #3c7bdd, #3f86e8); }
.middle { flex: 1; background: linear-gradient(90deg, #4593f3, #5cb3e8 50%, #85e48c); }
.fast { width: 60px; background: linear-gradient(90deg, #88ec70, #93f560); }
.speed-label { font-family: "Noto Sans CJK KR", sans-serif; font-size: 28px; line-height: 40px; }
.blue { color: #1c7fd8; }
.green { color: #67b57d; }
.stats { display: grid; grid-template-columns: repeat(3, 1fr); row-gap: 29px; padding: 0 45px; margin-top: 34px; }
.stats dt { font-family: "Noto Sans CJK KR", sans-serif; font-weight: 350; font-size: 36px; line-height: 54px; color: #b0b0b0; }
.stats dd { font-weight: 700; font-size: 72px; line-height: 90px; white-space: nowrap; }
.stats small { font-size: 46px; line-height: 46px; font-weight: 400; }
.spaced { margin-left: 12px; }

.awards { flex: 1; border-radius: 24px 24px 0 0; padding: 0 45px; }
.awards-head { display: flex; align-items: center; gap: 26px; height: 151px; border-bottom: 2px solid #dedede; }
.awards-head h2 { font-family: "Noto Sans CJK KR", sans-serif; font-weight: 400; font-size: 48px; line-height: 60px; }
.award { display: flex; align-items: center; gap: 62px; padding: 44px 30px 0; font-size: 48px; line-height: 72px; color: #555; font-weight: 350; }
.medal-number { font-size: 32px; font-weight: 400; fill: #b95718; text-anchor: middle; }

.home-indicator { position: absolute; left: 50%; bottom: 24px; width: 400px; height: 15px; margin-left: -200px; border-radius: 8px; background: #000; }
.frame { position: absolute; inset: 15px; border-radius: 22px; box-shadow: 0 0 0 60px rgba(0,0,0,0.2); pointer-events: none; z-index: 2; }
```
